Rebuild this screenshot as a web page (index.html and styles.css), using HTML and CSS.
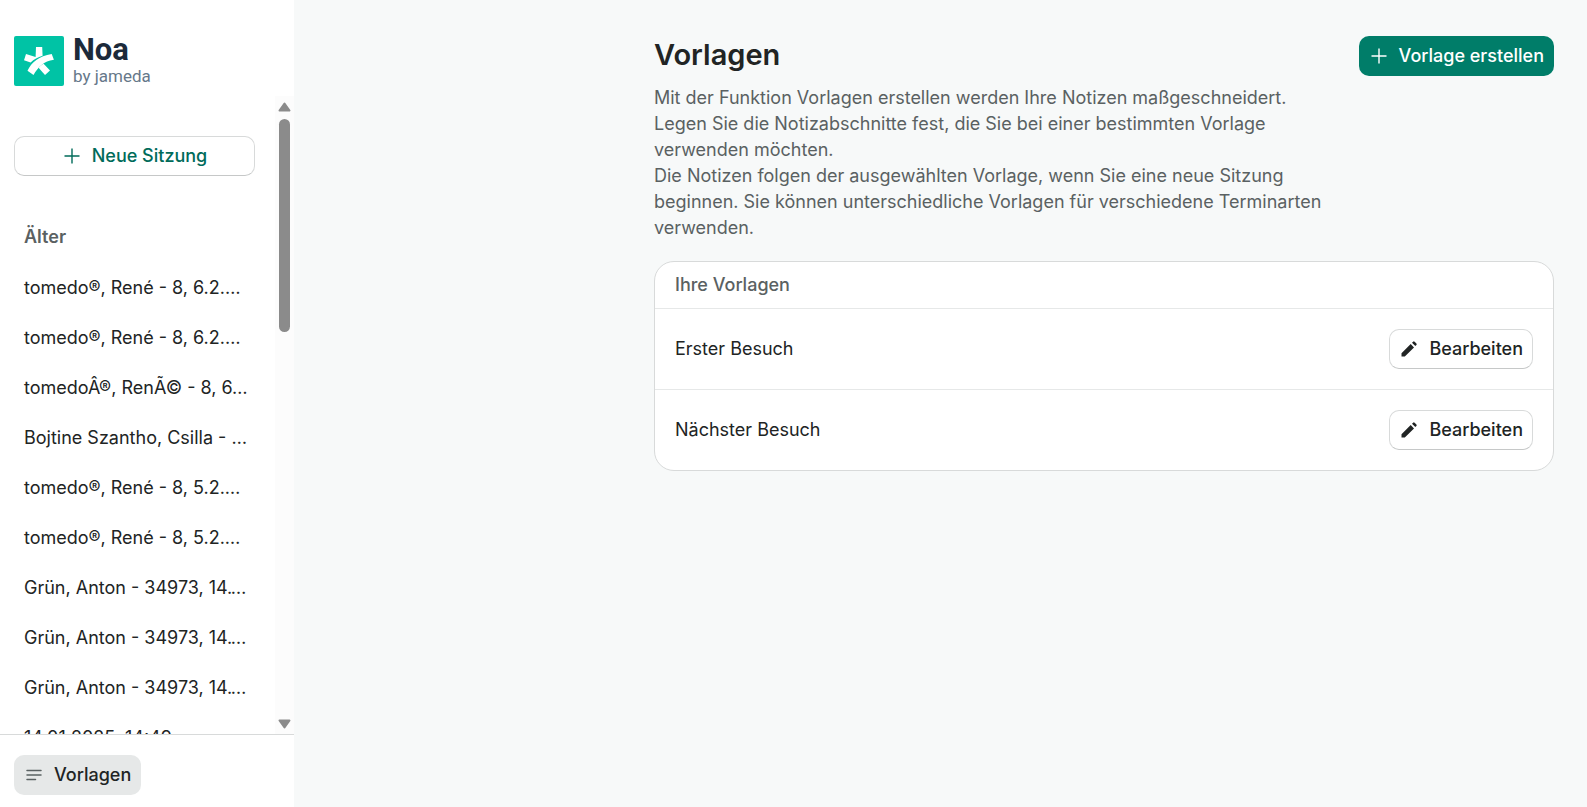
FILE: index.html
```
<!DOCTYPE html>
<html lang="de">
<head>
    <meta charset="UTF-8">
    <meta name="viewport" content="width=device-width, initial-scale=1.0">
    <title>Noa - Vorlagen</title>
    <link rel="stylesheet" href="styles.css">
</head>
<body>
    <div class="app">
        <aside class="sidebar">
            <div class="brand">
                <svg class="brand-logo" viewBox="0 0 50 50" aria-hidden="true">
                    <rect width="50" height="50" rx="2" fill="#00c3a5"/>
                    <g fill="#fff">
                        <path d="M22 11h6.200l.4 8.700c-4.800 1.300-8.700 3.500-12 6.700l-6.600-2.200 2-6.200 9.600 3z"/>
                        <path d="M13.500 34.800c4-8.800 11.500-14.600 24.200-16.800l2.200 5.800c-10.300 1.400-15.600 7.300-20.400 15.200z"/>
                        <path d="M24.600 31.800c1.500-1.700 3-2.900 5-4l6.400 6.700-5 4.500z"/>
                    </g>
                </svg>
                <div class="brand-text">
                    <span class="brand-name">Noa</span>
                    <span class="brand-by">by jameda</span>
                </div>
            </div>

            <div class="sidebar-body">
                <div class="sessions">
                    <button class="button new-session" type="button">
                        <svg class="icon" viewBox="0 0 20 20" aria-hidden="true"><path d="M10 2.500v15M2.500 10h15" stroke="currentColor" stroke-width="1.400"/></svg>
                        Neue Sitzung
                    </button>
                    <h2 class="group-title">Älter</h2>
                    <nav class="session-list" aria-label="Sitzungen">
                        <a href="#">tomedo®, René - 8, 6.2.2025, 10:12</a>
                        <a href="#">tomedo®, René - 8, 6.2.2025, 09:48</a>
                        <a href="#">tomedoÂ®, RenÃ© - 8, 6.2.2025</a>
                        <a href="#">Bojtine Szantho, Csilla - 35021</a>
                        <a href="#">tomedo®, René - 8, 5.2.2025, 15:30</a>
                        <a href="#">tomedo®, René - 8, 5.2.2025, 14:05</a>
                        <a href="#">Grün, Anton - 34973, 14.1.2025</a>
                        <a href="#">Grün, Anton - 34973, 14.1.2025</a>
                        <a href="#">Grün, Anton - 34973, 14.1.2025</a>
                        <a href="#">14.01.2025, 14:49</a>
                    </nav>
                </div>
                <div class="scrollbar" aria-hidden="true">
                    <svg class="scroll-arrow" viewBox="0 0 13 10"><path d="M6.500 1.500l5 7h-10z" fill="#8b8b8b" stroke="#8b8b8b" stroke-linejoin="round" stroke-width="2"/></svg>
                    <div class="scroll-track"><div class="scroll-thumb"></div></div>
                    <svg class="scroll-arrow" viewBox="0 0 13 10"><path d="M6.500 8.500l5-7h-10z" fill="#8b8b8b" stroke="#8b8b8b" stroke-linejoin="round" stroke-width="2"/></svg>
                </div>
            </div>

            <div class="sidebar-footer">
                <button class="button templates-button" type="button">
                    <svg class="icon" viewBox="0 0 20 20" aria-hidden="true"><path d="M3 5.500h14M3 10h14M3 14.500h8.500" stroke="#5a6162" stroke-width="1.500" stroke-linecap="round"/></svg>
                    Vorlagen
                </button>
            </div>
        </aside>

        <main class="main">
            <div class="content">
                <header class="page-header">
                    <div class="page-intro">
                        <h1>Vorlagen</h1>
                        <p>Mit der Funktion Vorlagen erstellen werden Ihre Notizen maßgeschneidert. Legen Sie die Notizabschnitte fest, die Sie bei einer bestimmten Vorlage verwenden möchten.<br>Die Notizen folgen der ausgewählten Vorlage, wenn Sie eine neue Sitzung beginnen. Sie können unterschiedliche Vorlagen für verschiedene Terminarten verwenden.</p>
                    </div>
                    <button class="button create-button" type="button">
                        <svg class="icon" viewBox="0 0 20 20" aria-hidden="true"><path d="M10 2.500v15M2.500 10h15" stroke="currentColor" stroke-width="1.400"/></svg>
                        Vorlage erstellen
                    </button>
                </header>

                <section class="card">
                    <h2 class="card-title">Ihre Vorlagen</h2>
                    <div class="card-row">
                        <span>Erster Besuch</span>
                        <button class="button edit-button" type="button">
                            <svg class="icon" viewBox="0 0 20 20" aria-hidden="true"><path d="M2.500 14.300L11.700 5.100l3.300 3.300-9.200 9.200H2.500zM13 3.800l1.100-1.100a1.100 1.100 0 0 1 1.500 0l1.800 1.800a1.100 1.100 0 0 1 0 1.500l-1.100 1.100z" fill="currentColor"/></svg>
                            Bearbeiten
                        </button>
                    </div>
                    <div class="card-row">
                        <span>Nächster Besuch</span>
                        <button class="button edit-button" type="button">
                            <svg class="icon" viewBox="0 0 20 20" aria-hidden="true"><path d="M2.500 14.300L11.700 5.100l3.300 3.300-9.200 9.200H2.500zM13 3.800l1.100-1.100a1.100 1.100 0 0 1 1.500 0l1.800 1.800a1.100 1.100 0 0 1 0 1.500l-1.100 1.100z" fill="currentColor"/></svg>
                            Bearbeiten
                        </button>
                    </div>
                </section>
            </div>
        </main>
    </div>
</body>
</html>
```
FILE: styles.css
```
* {
    margin: 0;
    padding: 0;
    box-sizing: border-box;
}

body {
    height: 100vh;
    overflow: hidden;
    background-color: #f7f9f9;
    color: #212424;
    font-family: Inter, sans-serif;
    font-size: 18px;
    line-height: 26px;
}

.app {
    height: 100vh;
    display: flex;
}

/* Sidebar */
.sidebar {
    width: 294px;
    flex-shrink: 0;
    display: flex;
    flex-direction: column;
    background-color: white;
}

.brand {
    display: flex;
    gap: 9px;
    padding: 36px 14px 10px;
}

.brand-logo {
    width: 50px;
    height: 50px;
}

.brand-text {
    display: flex;
    flex-direction: column;
    height: 50px;
    font-family: Roboto, sans-serif;
}

.brand-name {
    font-size: 31px;
    font-weight: 700;
    line-height: 27px;
    color: #1c2a3a;
}

.brand-by {
    font-size: 17px;
    line-height: 26px;
    color: #66788a;
}

.sidebar-body {
    flex: 1;
    min-height: 0;
    display: flex;
}

.sessions {
    flex: 1;
    min-width: 0;
    overflow: hidden;
    padding: 40px 20px 0 14px;
}

.group-title {
    margin-top: 48px;
    padding: 0 10px;
    font-size: 18px;
    font-weight: 600;
    color: #5a6162;
}

.session-list {
    margin-top: 13px;
}

.session-list a {
    display: block;
    padding: 12px 6px 12px 10px;
    color: #212424;
    text-decoration: none;
    white-space: nowrap;
    overflow: hidden;
    text-overflow: ellipsis;
}

.scrollbar {
    width: 19px;
    padding: 6px 3px 5px;
    display: flex;
    flex-direction: column;
    align-items: center;
    gap: 7px;
    background-color: #fcfcfc;
}

.scroll-arrow {
    width: 13px;
    height: 10px;
    flex-shrink: 0;
}

.scroll-track {
    flex: 1;
}

.scroll-thumb {
    width: 11px;
    height: 36%;
    border-radius: 6px;
    background-color: #8b8b8b;
}

.sidebar-footer {
    padding: 20px 14px 12px;
    border-top: 1px solid #d8dada;
}

/* Buttons */
.button {
    display: inline-flex;
    align-items: center;
    justify-content: center;
    gap: 10px;
    height: 40px;
    padding: 0 9px;
    border: 1px solid transparent;
    border-radius: 10px;
    font: inherit;
    font-weight: 500;
    color: #212424;
    white-space: nowrap;
    cursor: pointer;
}

.icon {
    width: 20px;
    height: 20px;
    flex-shrink: 0;
    fill: none;
}

.new-session {
    width: 100%;
    background-color: white;
    border-color: #d8dada;
    border-bottom-color: #c6c8c8;
    color: #006b5a;
}

.templates-button {
    background-color: #e6e8e8;
}

.create-button {
    flex-shrink: 0;
    background-color: #007d69;
    color: white;
}

.edit-button {
    background-color: white;
    border-color: #d8dada;
    border-bottom-color: #c6c8c8;
}

/* Main content */
.main {
    flex: 1;
    padding: 36px 33px;
    overflow-y: auto;
}

.content {
    max-width: 900px;
    margin-left: auto;
}

.page-header {
    display: flex;
    justify-content: space-between;
    align-items: flex-start;
}

.page-intro {
    max-width: 675px;
}

.page-intro h1 {
    margin-bottom: 11px;
    font-size: 29px;
    font-weight: 600;
    line-height: 38px;
}

.page-intro p {
    color: #5a6162;
}

.card {
    margin-top: 20px;
    border: 1px solid #d8dada;
    border-radius: 20px;
    background-color: white;
    overflow: hidden;
}

.card-title {
    padding: 10px 20px;
    font-size: 18px;
    font-weight: 500;
    color: #5a6162;
}

.card-row {
    display: flex;
    justify-content: space-between;
    align-items: center;
    padding: 20px;
    border-top: 1px solid #e6e8e8;
}
```
